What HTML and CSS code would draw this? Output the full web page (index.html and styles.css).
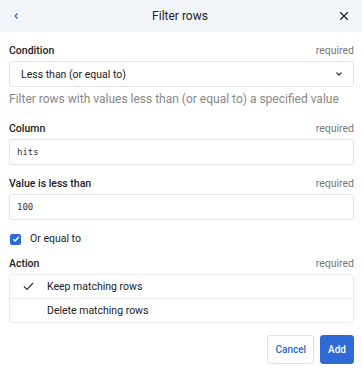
FILE: index.html
```html
<!doctype html>
<html lang="en">
<head>
<meta charset="utf-8">
<title>Filter rows</title>
<link rel="stylesheet" href="styles.css">
</head>
<body>

<div class="header">
	<button type="button" class="header__back" aria-label="Back">
		<svg width="8" height="8" viewBox="0 0 8 8"><path d="M5.5 1.5 L3 4 L5.5 6.5" fill="none" stroke="#3b6fd1" stroke-width="1.4"/></svg>
	</button>
	<h1>Filter rows</h1>
	<button type="button" class="header__close" aria-label="Close">
		<svg width="10" height="10" viewBox="0 0 10 10"><path d="M1.2 1.2 L8.8 8.8 M8.8 1.2 L1.2 8.8" fill="none" stroke="#333" stroke-width="1.5"/></svg>
	</button>
</div>

<div class="form">
	<div class="field">
		<div class="field__head"><label>Condition</label><span class="req">required</span></div>
		<div class="box select">
			<span>Less than (or equal to)</span>
			<svg width="8" height="6" viewBox="0 0 8 6"><path d="M1.5 1.5 L4 4 L6.5 1.5" fill="none" stroke="#444" stroke-width="1.4"/></svg>
		</div>
		<div class="help">Filter rows with values less than (or equal to) a specified value</div>
	</div>

	<div class="field">
		<div class="field__head"><label>Column</label><span class="req">required</span></div>
		<div class="box mono">hits</div>
	</div>

	<div class="field">
		<div class="field__head"><label>Value is less than</label><span class="req">required</span></div>
		<div class="box mono">100</div>
	</div>

	<div class="check">
		<span class="check__box">
			<svg width="8" height="8" viewBox="0 0 8 8"><path d="M1.2 4.2 L3.2 6 L6.8 1.8" fill="none" stroke="#fff" stroke-width="1.4"/></svg>
		</span>
		Or equal to
	</div>

	<div class="field">
		<div class="field__head"><label>Action</label><span class="req">required</span></div>
		<ul class="options">
			<li><span class="tick"><svg width="11" height="9" viewBox="0 0 11 9"><path d="M1 4.5 L4 7.5 L10 1" fill="none" stroke="#333" stroke-width="1.2"/></svg></span>Keep matching rows</li>
			<li><span class="tick"></span>Delete matching rows</li>
		</ul>
	</div>

	<div class="actions">
		<button type="button" class="btn btn--ghost">Cancel</button>
		<button type="button" class="btn btn--primary">Add</button>
	</div>
</div>

</body>
</html>
```

FILE: styles.css
```css
body {
	margin: 0;
	padding: 0;
	font-family: 'Roboto', sans-serif;
	font-size: 10.5px;
	color: #222;
	background: #fff;
}

.header {
	display: flex;
	align-items: center;
	height: 32px;
	background-color: #f2f5fa;
}
.header h1 {
	flex: 1;
	margin: 0;
	text-align: center;
	font-size: 12px;
	font-weight: 400;
	color: #222;
}
.header button {
	display: flex;
	align-items: center;
	justify-content: center;
	width: 32px;
	height: 32px;
	padding: 0;
	border: 0;
	background: none;
}
.header__close {
	margin-right: 2px;
}

.form {
	padding: 12px 8px 0 9px;
}

.field {
	margin-bottom: 12px;
}
.field__head {
	display: flex;
	justify-content: space-between;
	align-items: baseline;
	margin-bottom: 3px;
	line-height: 14px;
}
.field__head label {
	font-weight: 500;
	color: #222;
}
.req {
	color: #777;
}

.box {
	display: flex;
	align-items: center;
	height: 24px;
	padding: 0 7px;
	border: 1px solid #e2e4e8;
	border-radius: 3px;
}
.select {
	justify-content: space-between;
	padding: 0 10px 0 11px;
}
.mono {
	font-family: 'DejaVu Sans Mono', monospace;
	font-size: 9px;
	color: #333;
}

.help {
	margin-top: 4px;
	padding-bottom: 3px;
	font-size: 12px;
	line-height: 16px;
	color: #888;
}

.check {
	display: flex;
	align-items: center;
	gap: 9px;
	margin: 0 0 11px 1px;
	line-height: 14px;
}
.check__box {
	display: flex;
	align-items: center;
	justify-content: center;
	width: 11px;
	height: 11px;
	border-radius: 2px;
	background-color: #2d6ad6;
}

.options {
	margin: 0;
	padding: 0;
	list-style: none;
	border: 1px solid #e9ebee;
	border-radius: 3px;
}
.options li {
	display: flex;
	align-items: center;
	height: 23px;
	color: #222;
}
.options li + li {
	border-top: 1px solid #e9ebee;
}
.tick {
	display: flex;
	justify-content: center;
	width: 37px;
}

.actions {
	display: flex;
	justify-content: flex-end;
	gap: 6px;
}
.btn {
	height: 29px;
	padding: 0 7px;
	border-radius: 3px;
	font-family: 'Roboto', sans-serif;
	font-size: 10px;
	font-weight: 500;
}
.btn--ghost {
	border: 1px solid #dfe2e7;
	background: #fff;
	color: #2d6ad6;
}
.btn--primary {
	border: 1px solid #2d6ad6;
	background: #2d6ad6;
	color: #fff;
}
```
